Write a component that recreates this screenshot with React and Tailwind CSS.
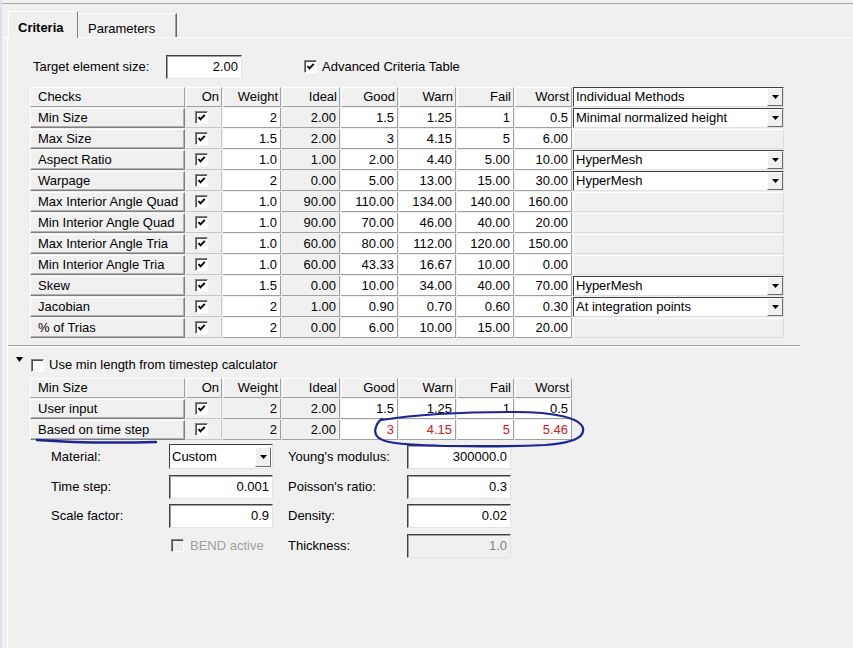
import React from "react";

const rows1 = [
  ["Min Size", "2", "2.00", "1.5", "1.25", "1", "0.5", "Minimal normalized height"],
  ["Max Size", "1.5", "2.00", "3", "4.15", "5", "6.00", null],
  ["Aspect Ratio", "1.0", "1.00", "2.00", "4.40", "5.00", "10.00", "HyperMesh"],
  ["Warpage", "2", "0.00", "5.00", "13.00", "15.00", "30.00", "HyperMesh"],
  ["Max Interior Angle Quad", "1.0", "90.00", "110.00", "134.00", "140.00", "160.00", null],
  ["Min Interior Angle Quad", "1.0", "90.00", "70.00", "46.00", "40.00", "20.00", null],
  ["Max Interior Angle Tria", "1.0", "60.00", "80.00", "112.00", "120.00", "150.00", null],
  ["Min Interior Angle Tria", "1.0", "60.00", "43.33", "16.67", "10.00", "0.00", null],
  ["Skew", "1.5", "0.00", "10.00", "34.00", "40.00", "70.00", "HyperMesh"],
  ["Jacobian", "2", "1.00", "0.90", "0.70", "0.60", "0.30", "At integration points"],
  ["% of Trias", "2", "0.00", "6.00", "10.00", "15.00", "20.00", null],
];

const rows2 = [
  ["User input", "2", "2.00", "1.5", "1.25", "1", "0.5", false],
  ["Based on time step", "2", "2.00", "3", "4.15", "5", "5.46", true],
];

const Check = ({ checked = true, disabled = false }) => (
  <span
    className={`inline-flex w-[13px] h-[13px] items-center justify-center border border-t-[#808080] border-l-[#808080] border-r-white border-b-white shadow-[inset_1px_1px_0_#505050] ${
      disabled ? "bg-[#ececec]" : "bg-white"
    }`}
  >
    {checked && (
      <svg width="9" height="9" viewBox="0 0 9 9">
        <path d="M1.5 4 L3.5 6.3 L7.8 1.8" stroke="#000" strokeWidth="1.9" fill="none" />
      </svg>
    )}
  </span>
);

const Arrow = () => (
  <span className="w-[16px] h-full shrink-0 bg-[#f0f0f0] border border-t-white border-l-white border-r-[#696969] border-b-[#696969] flex items-center justify-center">
    <svg width="7" height="4" viewBox="0 0 7 4">
      <path d="M0 0h7L3.5 4z" fill="#000" />
    </svg>
  </span>
);

const Head = ({ children, left }) => (
  <div
    className={`h-[20px] bg-[#f0f0f0] border border-t-white border-l-white border-r-[#a0a0a0] border-b-[#a0a0a0] flex items-center ${
      left ? "pl-[7px]" : "justify-end pr-[2px]"
    }`}
  >
    {children}
  </div>
);

const RowLabel = ({ children }) => (
  <div className="h-[20px] bg-[#f0f0f0] border border-t-white border-l-white border-r-[#808080] border-b-[#808080] shadow-[inset_-1px_-1px_0_#b0b0b0] flex items-center pl-[7px] whitespace-nowrap">
    {children}
  </div>
);

const Cell = ({ children, gray, red }) => (
  <div
    className={`h-[20px] border-r border-b border-[#a0a0a0] flex items-center justify-end pr-[3px] ${
      gray ? "bg-[#f0f0f0]" : "bg-white"
    } ${red ? "text-[#cc2020]" : ""}`}
  >
    {children}
  </div>
);

const OnCell = () => (
  <div className="h-[20px] bg-[#f0f0f0] border-r border-b border-[#c8c8c8] flex items-center pl-[9px]">
    <Check />
  </div>
);

const Drop = ({ text }) => (
  <div className="h-[20px] bg-white border border-t-[#404040] border-l-[#404040] border-r-[#e0e0e0] border-b-[#e0e0e0] flex items-center">
    <span className="flex-1 pl-[2px] whitespace-nowrap">{text}</span>
    <Arrow />
  </div>
);

const Field = ({ value, disabled }) => (
  <div
    className={`h-[24px] border border-t-[#404040] border-l-[#404040] border-r-[#e3e3e3] border-b-[#e3e3e3] shadow-[inset_1px_1px_0_#a0a0a0] flex items-center justify-end pr-[3px] ${
      disabled ? "bg-[#f0f0f0] text-[#808080]" : "bg-white"
    }`}
  >
    {value}
  </div>
);

export default function App() {
  return (
    <div className="relative w-[853px] h-[648px] overflow-hidden bg-[#f0f0f0] flex font-['Liberation_Sans',Arial,sans-serif] text-[13px] text-black leading-[16px]">
      <div className="w-[2px] bg-[#dae2ee]" />
      <div className="flex-1 flex flex-col">
        <div className="h-[4px] border-b border-[#a8a8a8]" />
        {/* tabs */}
        <div className="h-[34px] flex items-end pl-[6px] border-b border-white">
          <div className="relative z-10 -mb-px h-[27px] w-[70px] bg-[#f0f0f0] border-t border-l border-white border-r border-r-[#808080] pl-[9px] pt-[8px] font-bold">
            Criteria
          </div>
          <div className="h-[24px] w-[99px] border-t border-white border-r border-r-[#696969] shadow-[inset_-1px_0_0_#a0a0a0] pl-[10px] pt-[7px]">
            Parameters
          </div>
        </div>
        {/* panel */}
        <div className="flex-1 ml-[5px] border-l border-white pl-[22px]">
          <div className="mt-[17px] flex items-center">
            <span className="w-[136px] pl-[3px]">Target element size:</span>
            <div className="w-[76px]">
              <Field value="2.00" />
            </div>
            <span className="ml-[62px]">
              <Check />
            </span>
            <span className="ml-[5px]">Advanced Criteria Table</span>
          </div>

          <div className="mt-[8px] grid grid-cols-[155px_36px_58px_58px_57px_57px_57px_57px_211px] gap-px w-[754px]">
            <Head left>Checks</Head>
            <Head>On</Head>
            <Head>Weight</Head>
            <Head>Ideal</Head>
            <Head>Good</Head>
            <Head>Warn</Head>
            <Head>Fail</Head>
            <Head>Worst</Head>
            <Drop text="Individual Methods" />
            {rows1.map((r) => (
              <React.Fragment key={r[0]}>
                <RowLabel>{r[0]}</RowLabel>
                <OnCell />
                <Cell>{r[1]}</Cell>
                <Cell gray>{r[2]}</Cell>
                <Cell>{r[3]}</Cell>
                <Cell>{r[4]}</Cell>
                <Cell>{r[5]}</Cell>
                <Cell>{r[6]}</Cell>
                {r[7] ? (
                  <Drop text={r[7]} />
                ) : (
                  <div className="h-[20px] bg-[#f0f0f0] border border-t-white border-l-white border-r-[#dcdcdc] border-b-[#dcdcdc]" />
                )}
              </React.Fragment>
            ))}
          </div>

          <div className="-ml-[22px] mt-[7px] w-[792px] border-t border-[#a0a0a0] border-b border-b-white" />

          <div className="-ml-[14px] mt-[10px] flex items-start">
            <svg width="7" height="5" viewBox="0 0 7 5" className="mt-[0px]">
              <path d="M0 0h7L3.5 5z" fill="#000" />
            </svg>
            <span className="ml-[8px] mt-[2px]">
              <Check checked={false} />
            </span>
            <span className="ml-[5px] mt-[0px]">Use min length from timestep calculator</span>
          </div>

          <div className="mt-[2px] grid grid-cols-[155px_36px_58px_58px_57px_57px_57px_57px] gap-px w-[542px]">
            <Head left>Min Size</Head>
            <Head>On</Head>
            <Head>Weight</Head>
            <Head>Ideal</Head>
            <Head>Good</Head>
            <Head>Warn</Head>
            <Head>Fail</Head>
            <Head>Worst</Head>
            {rows2.map((r) => (
              <React.Fragment key={r[0]}>
                <RowLabel>{r[0]}</RowLabel>
                <OnCell />
                <Cell gray>{r[1]}</Cell>
                <Cell gray>{r[2]}</Cell>
                <Cell red={r[7]}>{r[3]}</Cell>
                <Cell red={r[7]}>{r[4]}</Cell>
                <Cell red={r[7]}>{r[5]}</Cell>
                <Cell red={r[7]}>{r[6]}</Cell>
              </React.Fragment>
            ))}
          </div>

          <div className="mt-[4px] ml-[21px] grid grid-cols-[118px_104px_15px_119px_104px] gap-y-[5.5px] items-center">
            <span>Material:</span>
            <div className="h-[25px] bg-white border border-t-[#404040] border-l-[#404040] border-r-[#e3e3e3] border-b-[#e3e3e3] flex items-center">
              <span className="flex-1 pl-[2px]">Custom</span>
              <span className="h-[20px] mr-[1px]">
                <Arrow />
              </span>
            </div>
            <span />
            <span>Young's modulus:</span>
            <Field value="300000.0" />

            <span>Time step:</span>
            <Field value="0.001" />
            <span />
            <span>Poisson's ratio:</span>
            <Field value="0.3" />

            <span>Scale factor:</span>
            <Field value="0.9" />
            <span />
            <span>Density:</span>
            <Field value="0.02" />

            <span />
            <div className="flex items-center pl-[2px] text-[#a0a0a0]">
              <Check checked={false} disabled />
              <span className="ml-[6px]">BEND active</span>
            </div>
            <span />
            <span>Thickness:</span>
            <Field value="1.0" disabled />
          </div>
        </div>
      </div>

      {/* hand-drawn annotations */}
      <svg className="absolute inset-0 pointer-events-none" width="853" height="648" viewBox="0 0 853 648">
        <path
          d="M37 440 C 70 442.5, 115 443, 156 442"
          stroke="#1b2596"
          strokeWidth="2.4"
          fill="none"
          strokeLinecap="round"
        />
        <path
          d="M381 420 C 420 414, 470 412, 515 412 C 555 412, 580 418, 583 428 C 585 438, 572 443, 545 445 C 500 447, 430 447, 395 443 C 378 441, 373 435, 376 427 C 377 423, 379 421, 382 419"
          stroke="#1b2596"
          strokeWidth="2.2"
          fill="none"
          strokeLinecap="round"
        />
      </svg>
    </div>
  );
}
